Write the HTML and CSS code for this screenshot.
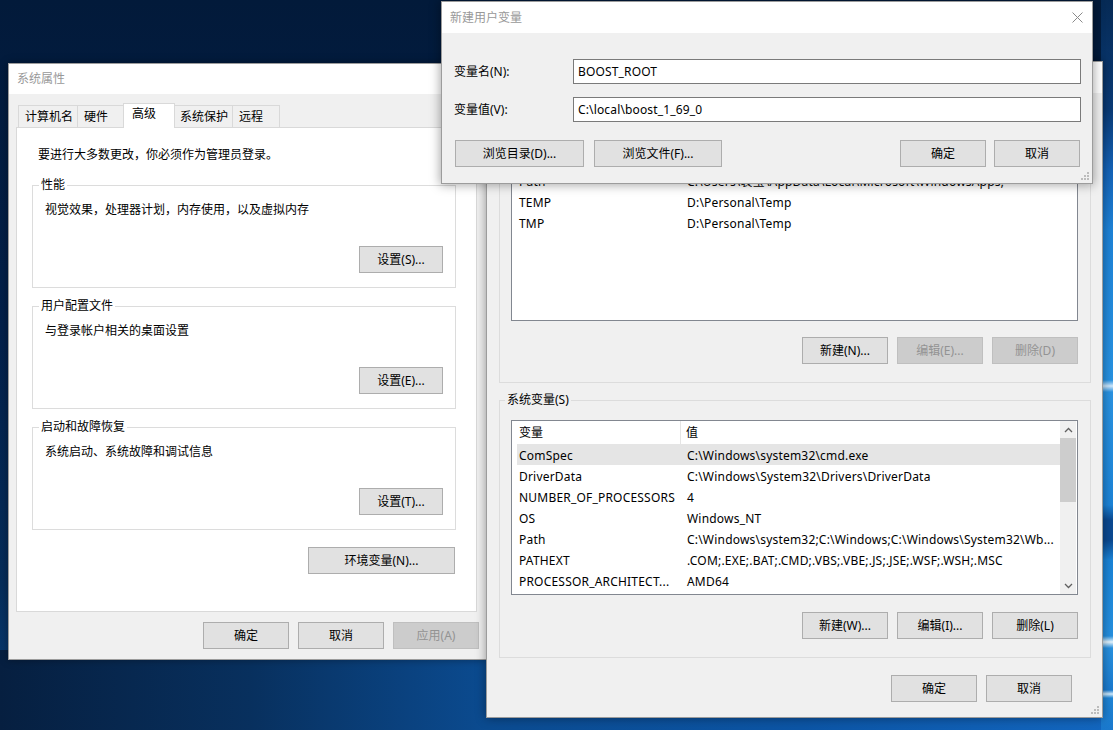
FILE: index.html
```html
<!DOCTYPE html>
<html lang="zh-CN">
<head>
<meta charset="utf-8">
<title>环境变量</title>
<link rel="stylesheet" href="styles.css">
</head>
<body>
<main class="desktop">

  <section class="win sysprops">
    <header class="titlebar"><span class="title">系统属性</span></header>
    <div class="sp-body">
      <nav class="tabs">
        <span class="tab">计算机名</span>
        <span class="tab">硬件</span>
        <span class="tab active">高级</span>
        <span class="tab">系统保护</span>
        <span class="tab">远程</span>
      </nav>
      <div class="panel">
        <p class="notice">要进行大多数更改，你必须作为管理员登录。</p>
        <fieldset class="group sp-group">
          <legend>性能</legend>
          <p class="desc">视觉效果，处理器计划，内存使用，以及虚拟内存</p>
          <div class="btnrow sp-grp-btns"><button class="btn btn-set">设置(S)...</button></div>
        </fieldset>
        <fieldset class="group sp-group">
          <legend>用户配置文件</legend>
          <p class="desc">与登录帐户相关的桌面设置</p>
          <div class="btnrow sp-grp-btns"><button class="btn btn-set">设置(E)...</button></div>
        </fieldset>
        <fieldset class="group sp-group">
          <legend>启动和故障恢复</legend>
          <p class="desc">系统启动、系统故障和调试信息</p>
          <div class="btnrow sp-grp-btns"><button class="btn btn-set">设置(T)...</button></div>
        </fieldset>
        <div class="btnrow env-row"><button class="btn btn-env">环境变量(N)...</button></div>
      </div>
      <div class="btnrow sp-footer">
        <button class="btn btn-sp">确定</button>
        <button class="btn btn-sp">取消</button>
        <button class="btn btn-sp" disabled>应用(A)</button>
      </div>
    </div>
  </section>

  <section class="win envvars">
    <header class="titlebar"><span class="title">环境变量</span></header>
    <div class="ev-body">
      <fieldset class="group ev-group">
        <legend>袁宝 的用户变量(U)</legend>
        <div class="listbox">
          <div class="lmain">
            <div class="lhead"><span class="c1">变量</span><span class="c2">值</span></div>
            <div class="lrow"><span class="c1">Path</span><span class="c2">C:\Users\袁宝\AppData\Local\Microsoft\WindowsApps;</span></div>
            <div class="lrow"><span class="c1">TEMP</span><span class="c2">D:\Personal\Temp</span></div>
            <div class="lrow"><span class="c1">TMP</span><span class="c2">D:\Personal\Temp</span></div>
          </div>
        </div>
        <div class="btnrow ev-btns">
          <button class="btn btn-ev">新建(N)...</button>
          <button class="btn btn-ev" disabled>编辑(E)...</button>
          <button class="btn btn-ev" disabled>删除(D)</button>
        </div>
      </fieldset>

      <fieldset class="group ev-group sys">
        <legend>系统变量(S)</legend>
        <div class="listbox">
          <div class="lmain">
            <div class="lhead"><span class="c1">变量</span><span class="c2">值</span></div>
            <div class="lrow selected"><span class="c1">ComSpec</span><span class="c2">C:\Windows\system32\cmd.exe</span></div>
            <div class="lrow"><span class="c1">DriverData</span><span class="c2">C:\Windows\System32\Drivers\DriverData</span></div>
            <div class="lrow"><span class="c1">NUMBER_OF_PROCESSORS</span><span class="c2">4</span></div>
            <div class="lrow"><span class="c1">OS</span><span class="c2">Windows_NT</span></div>
            <div class="lrow"><span class="c1">Path</span><span class="c2">C:\Windows\system32;C:\Windows;C:\Windows\System32\Wb...</span></div>
            <div class="lrow"><span class="c1">PATHEXT</span><span class="c2">.COM;.EXE;.BAT;.CMD;.VBS;.VBE;.JS;.JSE;.WSF;.WSH;.MSC</span></div>
            <div class="lrow"><span class="c1">PROCESSOR_ARCHITECT...</span><span class="c2">AMD64</span></div>
          </div>
          <div class="vscroll">
            <span class="sb-btn"><svg width="9" height="6" viewBox="0 0 9 6"><polyline points="1,5 4.5,1.5 8,5" fill="none" stroke="#606060" stroke-width="1.3"/></svg></span>
            <span class="thumb"></span>
            <span class="sb-fill"></span>
            <span class="sb-btn"><svg width="9" height="6" viewBox="0 0 9 6"><polyline points="1,1 4.5,4.5 8,1" fill="none" stroke="#606060" stroke-width="1.3"/></svg></span>
          </div>
        </div>
        <div class="btnrow ev-btns sys-btns">
          <button class="btn btn-ev">新建(W)...</button>
          <button class="btn btn-ev">编辑(I)...</button>
          <button class="btn btn-ev">删除(L)</button>
        </div>
      </fieldset>

      <div class="btnrow ev-footer">
        <button class="btn btn-sp">确定</button>
        <button class="btn btn-sp">取消</button>
      </div>
    </div>
    <svg class="grip" width="8" height="8" viewBox="0 0 8 8"><g fill="#bcbcbc"><rect x="6" y="0" width="2" height="2"/><rect x="3" y="3" width="2" height="2"/><rect x="6" y="3" width="2" height="2"/><rect x="0" y="6" width="2" height="2"/><rect x="3" y="6" width="2" height="2"/><rect x="6" y="6" width="2" height="2"/></g></svg>
  </section>

  <section class="win newvar">
    <header class="titlebar">
      <span class="title">新建用户变量</span>
      <svg class="close" width="11" height="11" viewBox="0 0 11 11"><path d="M0.5 0.5 L10.5 10.5 M10.5 0.5 L0.5 10.5" stroke="#8a8a8a" stroke-width="1" fill="none"/></svg>
    </header>
    <div class="nv-body">
      <div class="field"><label class="flabel" for="vname">变量名(N):</label><input class="nv-input" id="vname" type="text" value="BOOST_ROOT" readonly></div>
      <div class="field"><label class="flabel" for="vval">变量值(V):</label><input class="nv-input" id="vval" type="text" value="C:\local\boost_1_69_0" readonly></div>
      <div class="nv-btns">
        <div class="grp left">
          <button class="btn btn-browse">浏览目录(D)...</button>
          <button class="btn btn-browse2">浏览文件(F)...</button>
        </div>
        <div class="grp right">
          <button class="btn btn-sp">确定</button>
          <button class="btn btn-sp">取消</button>
        </div>
      </div>
    </div>
    <svg class="grip" width="8" height="8" viewBox="0 0 8 8"><g fill="#bcbcbc"><rect x="6" y="0" width="2" height="2"/><rect x="3" y="3" width="2" height="2"/><rect x="6" y="3" width="2" height="2"/><rect x="0" y="6" width="2" height="2"/><rect x="3" y="6" width="2" height="2"/><rect x="6" y="6" width="2" height="2"/></g></svg>
  </section>

</main>
</body>
</html>
```

FILE: styles.css
```css
* { box-sizing: border-box; }

html, body { margin: 0; height: 100%; }

body {
  overflow: hidden;
  font-family: "Noto Sans", "Noto Sans CJK SC", sans-serif;
  font-size: 12px;
  line-height: 16px;
  color: #000;
  background-color: #031c3e;
  background-image:
    linear-gradient(180deg, #062a55 0, #0a3b77 110px, #1463b8 170px, #1e83d8 230px, #2792e2 380px, #cfeaff 386px, #2a93e2 392px, #1c84d8 505px, #0b4a92 520px, #0b4a92 540px, #1a84d8 560px, #2590e0 636px, #e6f6ff 642px, #2891e0 648px, #1a7bd0 690px, #d0ecff 694px, #1f86d8 698px, #1a78cc 730px),
    linear-gradient(90deg, #061f40 0, #08305e 250px, #0b4b90 486px, #0c55a5 800px, #1367c0 1113px),
    linear-gradient(180deg, #021a3a 0, #03204a 45%, #062d5a 80%, #0a3f7c 100%);
  background-size: 12px 730px, 100% 80px, 100% 100%;
  background-position: right top, left bottom, 0 0;
  background-repeat: no-repeat;
}

.desktop {
  position: relative;
  width: 1113px;
  height: 730px;
}

/* ---------- generic window ---------- */
.win {
  position: absolute;
  display: flex;
  flex-direction: column;
  background: #f0f0f0;
  border: 1px solid rgba(0, 0, 0, 0.35);
}

.titlebar {
  flex: none;
  display: flex;
  align-items: center;
  justify-content: space-between;
  background: #fff;
  color: #999;
}

.btnrow {
  display: flex;
  justify-content: flex-end;
}

.btn {
  flex: none;
  height: 27px;
  padding: 0;
  margin: 0;
  border: 1px solid #adadad;
  background: #e1e1e1;
  font: inherit;
  line-height: 25px;
  color: #000;
  text-align: center;
  white-space: nowrap;
}

.btn:disabled {
  background: #cccccc;
  border-color: #bfbfbf;
  color: #939393;
}

.group {
  margin: 0;
  min-width: 0;
  border: 1px solid #dcdcdc;
}

.group legend {
  padding: 0 2px;
  margin-left: -6px;
  line-height: 16px;
}

/* ---------- 系统属性 ---------- */
.sysprops {
  left: 8px;
  top: 63px;
  width: 479px;
  height: 597px;
  box-shadow: 0 0 8px rgba(0, 0, 0, 0.35);
}

.sysprops .titlebar {
  height: 30px;
  padding-left: 8px;
}

.sp-body {
  display: flex;
  flex-direction: column;
  padding: 9px 9px 0 7px;
}

.tabs {
  display: flex;
  align-items: flex-end;
  height: 24px;
  padding-left: 2px;
}

.tab {
  height: 22px;
  min-width: 48px;
  padding: 0 4px 0 6px;
  border-top: 1px solid #d9d9d9;
  border-left: 1px solid #d9d9d9;
  background: #f0f0f0;
  line-height: 21px;
  white-space: nowrap;
}

.tab:last-child {
  border-right: 1px solid #d9d9d9;
}

.tab.active {
  position: relative;
  z-index: 2;
  height: 25px;
  min-width: 52px;
  margin: 0 -2px -1px;
  padding: 0 6px 4px 8px;
  border-right: 1px solid #d9d9d9;
  background: #fff;
  line-height: 20px;
}

.panel {
  display: flex;
  flex-direction: column;
  height: 485px;
  padding: 19px 20px 0 15px;
  background: #fff;
  border: 1px solid #d9d9d9;
}

.notice {
  margin: 0;
  padding-left: 6px;
}

.sp-group {
  margin-top: 14px;
  padding: 9px 12px 14px;
}

.sp-group + .sp-group {
  margin-top: 10px;
}

.desc {
  margin: 0;
}

.sp-grp-btns {
  margin-top: 28px;
}

.btn-set { width: 84px; }

.env-row {
  margin-top: 17px;
  padding-right: 1px;
}

.btn-env { width: 147px; }

.sp-footer {
  gap: 9px;
  margin-top: 10px;
  margin-right: -2px;
}

.btn-sp { width: 86px; }

/* ---------- 环境变量 ---------- */
.envvars {
  left: 486px;
  top: 61px;
  width: 617px;
  height: 657px;
  box-shadow: 0 0 10px rgba(0, 0, 0, 0.4);
}

.envvars .titlebar {
  height: 31px;
  padding-left: 8px;
}

.ev-body {
  display: flex;
  flex-direction: column;
  padding: 26px 11px 0 12px;
}

.ev-group {
  padding: 11px 12px 18px 11px;
}

.ev-group.sys {
  margin-top: 9px;
  padding-top: 12px;
}

.listbox {
  display: flex;
  height: 175px;
  background: #fff;
  border: 1px solid #828790;
}

.lmain {
  flex: 1;
  min-width: 0;
  overflow: hidden;
}

.lhead {
  display: flex;
  height: 23px;
  align-items: center;
}

.lhead .c1 {
  width: 169px;
  height: 100%;
  padding-left: 7px;
  line-height: 23px;
  border-right: 1px solid #e5e5e5;
}

.lhead .c2 {
  padding-left: 5px;
}

.lrow {
  display: flex;
  align-items: center;
  height: 21px;
  padding-top: 2px;
  margin-left: 5px;
  white-space: nowrap;
  letter-spacing: 0.2px;
}

.lrow.selected {
  background: #e5e5e5;
}

.lrow .c1 {
  flex: none;
  width: 164px;
  padding-left: 2px;
  overflow: hidden;
}

.lrow .c2 {
  flex: 1;
  min-width: 0;
  padding-left: 6px;
  overflow: hidden;
}

.vscroll {
  flex: none;
  display: flex;
  flex-direction: column;
  width: 16px;
  margin-right: 1px;
  background: #f0f0f0;
}

.sb-btn {
  display: flex;
  align-items: center;
  justify-content: center;
  height: 17px;
}

.thumb {
  height: 64px;
  background: #cdcdcd;
}

.sb-fill { flex: 1; }

.ev-btns {
  gap: 9px;
  margin-top: 16px;
}

.sys-btns { margin-top: 17px; }

.btn-ev { width: 86px; }

.ev-footer {
  gap: 9px;
  margin-top: 17px;
  margin-right: 19px;
}

.grip {
  position: absolute;
  right: 3px;
  bottom: 3px;
}

/* ---------- 新建用户变量 ---------- */
.newvar {
  left: 441px;
  top: 1px;
  width: 652px;
  height: 183px;
  box-shadow: 0 0 10px 1px rgba(0, 0, 0, 0.35);
}

.newvar .titlebar {
  height: 31px;
  padding-left: 8px;
}

.close { margin-right: 9px; }

.nv-body {
  display: flex;
  flex-direction: column;
  padding: 26px 11px 0 12px;
}

.field {
  display: flex;
  align-items: center;
  height: 25px;
}

.field + .field { margin-top: 13px; }

.flabel {
  flex: none;
  width: 119px;
}

.nv-input {
  flex: 1;
  min-width: 0;
  height: 25px;
  margin: 0;
  padding: 0 4px;
  border: 1px solid #7a7a7a;
  background: #fff;
  font: inherit;
  letter-spacing: 0.15px;
  color: #000;
  outline: none;
}

.nv-btns {
  display: flex;
  justify-content: space-between;
  margin-top: 18px;
  padding: 0 1px;
}

.grp { display: flex; }
.grp.left { gap: 10px; }
.grp.right { gap: 8px; }

.btn-browse { width: 129px; }
.btn-browse2 { width: 128px; }
```
